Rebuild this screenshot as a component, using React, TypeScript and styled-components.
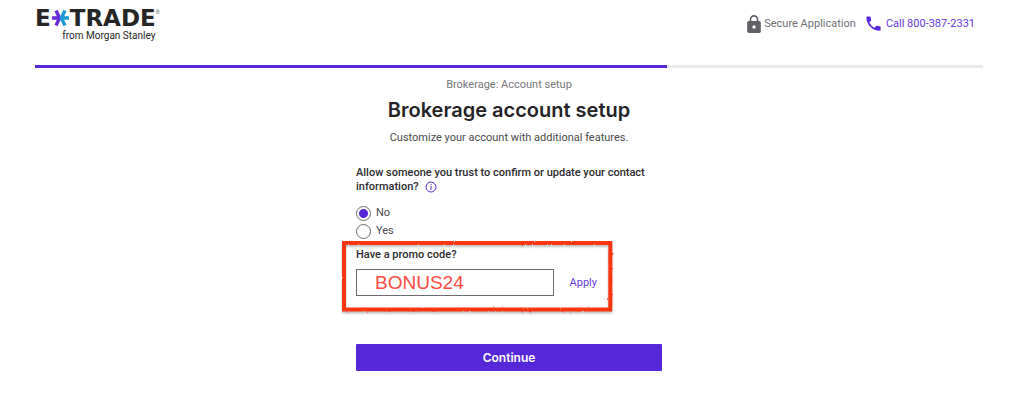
import React, { useState } from "react";
import styled, { createGlobalStyle } from "styled-components";

const purple = "#5627d8";
const linkPurple = "#6539dc";

const GlobalStyle = createGlobalStyle`
  *, *::before, *::after { box-sizing: border-box; }
  body {
    margin: 0;
    background: #fff;
    color: #2b2b2e;
    font-family: Roboto, "Liberation Sans", sans-serif;
    font-size: 11px;
    line-height: 14px;
  }
`;

const Page = styled.div`
  padding: 8px 41px 40px 35px;
`;

const Header = styled.header`
  display: flex;
  justify-content: space-between;
  align-items: flex-start;
  height: 57px;
`;

const Logo = styled.a`
  display: flex;
  flex-direction: column;
  align-items: flex-end;
  color: #262626;
  text-decoration: none;
`;

const Wordmark = styled.span`
  display: flex;
  align-items: center;
  font: bold 23px/20px "DejaVu Sans", sans-serif;
  font-kerning: none;
`;

const Trademark = styled.sup`
  align-self: flex-start;
  font: 5px/8px "Liberation Sans", sans-serif;
`;

const Byline = styled.span`
  padding-right: 4px;
  font-size: 10px;
  line-height: 16px;
`;

const HeaderLinks = styled.div`
  display: flex;
  align-items: center;
  gap: 8px;
  padding: 6px 8px 0 0;
`;

const HeaderItem = styled.span`
  display: flex;
  align-items: center;
  gap: 3px;
  color: #707074;
`;

const PhoneLink = styled.a`
  display: flex;
  align-items: center;
  gap: 3px;
  color: ${linkPurple};
  text-decoration: none;
`;

const Progress = styled.div`
  height: 3px;
  background: #e8e8e8;
`;

const ProgressFill = styled.div`
  width: 66.66%;
  height: 100%;
  background: ${purple};
`;

const Intro = styled.div`
  display: flex;
  flex-direction: column;
  align-items: center;
  padding-top: 10px;
  text-align: center;
`;

const Step = styled.p`
  margin: 0;
  color: #77777a;
`;

const Title = styled.h1`
  margin: 4px 0 7px;
  font-family: Inter, sans-serif;
  font-size: 20px;
  line-height: 28px;
  font-weight: 600;
  color: #242428;
`;

const Lead = styled.p`
  margin: 0;
  color: #4a4a4e;
`;

const Form = styled.form`
  display: flex;
  flex-direction: column;
  width: 306px;
  max-width: 100%;
  margin: 21px auto 0;
`;

const Choices = styled.fieldset`
  margin: 0;
  padding: 0;
  border: 0;
`;

const Question = styled.legend`
  padding: 0;
  margin-bottom: 10px;
  font-weight: 500;
`;

const InfoButton = styled.button`
  padding: 0;
  margin-left: 4px;
  border: 0;
  background: none;
  vertical-align: top;
  height: 14px;
  cursor: pointer;
  svg { display: block; }
`;

const Choice = styled.label`
  display: flex;
  align-items: center;
  gap: 5px;
  height: 18px;
  color: #4a4a4e;
`;

const Radio = styled.input`
  appearance: none;
  width: 15px;
  height: 15px;
  margin: 0;
  border: 1px solid #6c6c70;
  border-radius: 50%;
  background: #fff;
  &:checked {
    background: radial-gradient(circle, ${purple} 4px, #fff 5px);
  }
`;

const Promo = styled.div`
  position: relative;
  margin: 1px 51px 0 -14px;
  padding: 7px 14px 15px;
`;

const Marker = styled.svg`
  position: absolute;
  inset: 0;
  width: 100%;
  height: 100%;
  overflow: visible;
  pointer-events: none;
  filter: drop-shadow(0 2px 1px rgba(0, 0, 0, 0.25));
`;

const PromoLabel = styled.label`
  display: block;
  margin-bottom: 7px;
  font-weight: 500;
`;

const PromoRow = styled.div`
  display: flex;
  align-items: center;
  gap: 16px;
`;

const PromoInput = styled.input`
  flex: 0 1 198px;
  min-width: 0;
  height: 27px;
  padding: 0 18px;
  border: 1px solid #6c6c70;
  border-radius: 0;
  color: #ff4a42;
  font: 19px/24px "Liberation Sans", sans-serif;
`;

const Apply = styled.button`
  padding: 0;
  border: 0;
  background: none;
  color: ${linkPurple};
  font: inherit;
  cursor: pointer;
`;

const Continue = styled.button`
  height: 27px;
  margin-top: 33px;
  border: 0;
  border-radius: 1px;
  background: ${purple};
  color: #fff;
  font: 600 12px/16px Inter, sans-serif;
  cursor: pointer;
`;

const Star = () => (
  <svg width="19" height="18" viewBox="0 0 19 18" fill="none" strokeWidth="3.4" aria-hidden="true">
    <path d="M1 9h7M5 1.4l3.6 7.6L5 16.6" stroke="#6a2bd9" />
    <path d="M18 9h-7M14 1.4L10.4 9l3.6 7.6" stroke="#1c9ad6" />
  </svg>
);

export default function App() {
  const [trusted, setTrusted] = useState("no");
  const [code, setCode] = useState("BONUS24");
  return (
    <>
      <GlobalStyle />
      <Page>
        <Header>
          <Logo href="#">
            <Wordmark>E<Star />TRADE<Trademark>®</Trademark></Wordmark>
            <Byline>from Morgan Stanley</Byline>
          </Logo>
          <HeaderLinks>
            <HeaderItem>
              <svg width="14" height="18" viewBox="4 1 16 21" fill="#626266" aria-hidden="true">
                <path d="M18 8h-1V6A5 5 0 0 0 7 6v2H6a2 2 0 0 0-2 2v10a2 2 0 0 0 2 2h12a2 2 0 0 0 2-2V10a2 2 0 0 0-2-2zm-6 9a2 2 0 1 1 0-4 2 2 0 0 1 0 4zm3.1-9H8.9V6a3.1 3.1 0 0 1 6.2 0z" />
              </svg>
              Secure Application
            </HeaderItem>
            <PhoneLink href="tel:8003872331">
              <svg width="19" height="19" viewBox="0 0 24 24" fill={purple} aria-hidden="true">
                <path d="M6.62 10.79a15.15 15.15 0 0 0 6.59 6.59l2.2-2.2a1 1 0 0 1 1.02-.24c1.12.37 2.33.57 3.57.57a1 1 0 0 1 1 1V20a1 1 0 0 1-1 1A17 17 0 0 1 3 4a1 1 0 0 1 1-1h3.5a1 1 0 0 1 1 1c0 1.25.2 2.45.57 3.57a1 1 0 0 1-.25 1.02z" />
              </svg>
              Call 800-387-2331
            </PhoneLink>
          </HeaderLinks>
        </Header>
        <Progress><ProgressFill /></Progress>
        <Intro>
          <Step>Brokerage: Account setup</Step>
          <Title>Brokerage account setup</Title>
          <Lead>Customize your account with additional features.</Lead>
        </Intro>
        <Form onSubmit={(e) => e.preventDefault()}>
          <Choices>
            <Question>
              Allow someone you trust to confirm or update your contact information?{" "}
              <InfoButton type="button" aria-label="More information">
                <svg width="12" height="14" viewBox="0 0 12 14" fill="none" stroke={purple}>
                  <circle cx="6" cy="7" r="5" />
                  <path d="M6 6v4M6 4v1" />
                </svg>
              </InfoButton>
            </Question>
            <Choice>
              <Radio type="radio" name="trusted" checked={trusted === "no"} onChange={() => setTrusted("no")} />
              No
            </Choice>
            <Choice>
              <Radio type="radio" name="trusted" checked={trusted === "yes"} onChange={() => setTrusted("yes")} />
              Yes
            </Choice>
          </Choices>
          <Promo>
            <PromoLabel htmlFor="promo">Have a promo code?</PromoLabel>
            <PromoRow>
              <PromoInput id="promo" value={code} onChange={(e) => setCode(e.target.value)} />
              <Apply type="button">Apply</Apply>
            </PromoRow>
            <Marker aria-hidden="true">
              <filter id="rough" x="-5%" y="-10%" width="110%" height="120%">
                <feTurbulence type="fractalNoise" baseFrequency="0.4" numOctaves="2" seed="3" />
                <feDisplacementMap in="SourceGraphic" scale="2" xChannelSelector="R" yChannelSelector="G" />
              </filter>
              <rect x="2" y="2" width="99%" height="95%" fill="none" stroke="#fb3510" strokeWidth="4" filter="url(#rough)" />
            </Marker>
          </Promo>
          <Continue type="submit">Continue</Continue>
        </Form>
      </Page>
    </>
  );
}
